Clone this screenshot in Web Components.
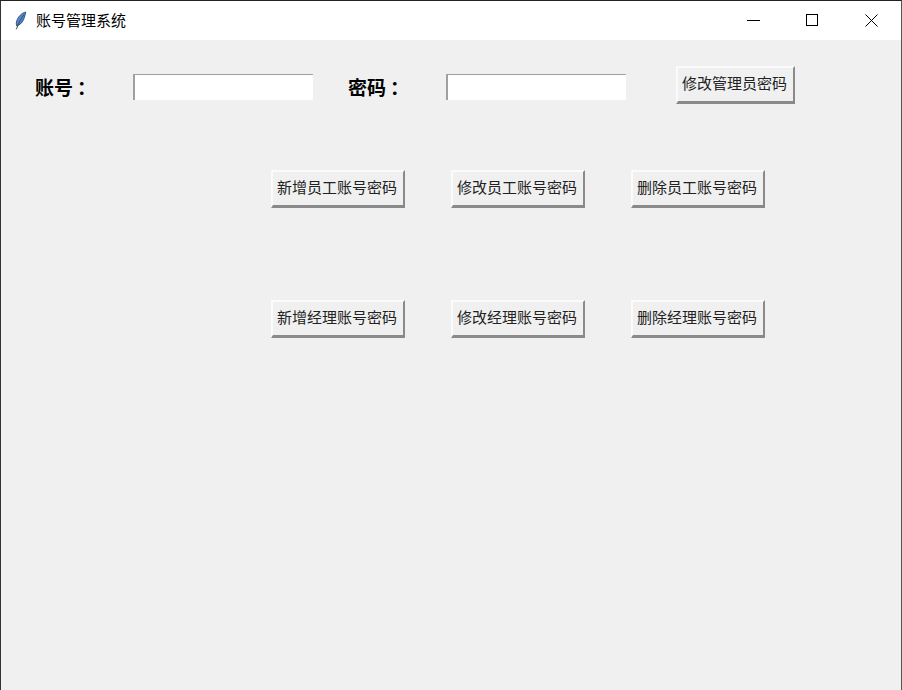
<!DOCTYPE html>
<html lang="zh">
<head>
<meta charset="utf-8">
<title>账号管理系统</title>
<style>
  html, body { margin: 0; height: 100%; background: #f0f0f0; }
  body { font-family: "Noto Sans CJK SC", "Liberation Sans", sans-serif; overflow: hidden; }
  .colon { margin-left: 4px; }
</style>
</head>
<body>
<app-window>
  <title-bar>账号管理系统</title-bar>
  <form-row class="login">
    <field-label style="width:99px">账号<span class="colon">：</span></field-label>
    <text-input style="margin-right:34px"></text-input>
    <field-label style="width:99px">密码<span class="colon">：</span></field-label>
    <text-input style="margin-right:50px"></text-input>
    <tk-button style="width:119px;height:38px">修改管理员密码</tk-button>
  </form-row>
  <button-row style="margin-top:66px">
    <tk-button>新增员工账号密码</tk-button>
    <tk-button>修改员工账号密码</tk-button>
    <tk-button>删除员工账号密码</tk-button>
  </button-row>
  <button-row style="margin-top:92px">
    <tk-button>新增经理账号密码</tk-button>
    <tk-button>修改经理账号密码</tk-button>
    <tk-button>删除经理账号密码</tk-button>
  </button-row>
</app-window>

<script>
class AppWindow extends HTMLElement {
    constructor() {
        super();
        const root = this.attachShadow({ mode: 'open' });
        root.innerHTML = `
      <style>
        :host{
          display:block;
          box-sizing:border-box;
          width:902px;height:690px;
          background:#f0f0f0;
          border-top:1px solid #222;
          border-left:1px solid #333;
          border-right:1px solid #555;
        }
      </style>
      <slot></slot>
    `;
    }
}

class TitleBar extends HTMLElement {
    constructor() {
        super();
        const root = this.attachShadow({ mode: 'open' });
        root.innerHTML = `
      <style>
        :host{
          display:flex;
          align-items:center;
          height:39px;
          background:#fff;
          color:#000;
          font-size:15px;
        }
        .icon{width:12px;height:22px;margin-left:14px;margin-right:9px;flex:none}
        .name{flex:1;white-space:nowrap;position:relative;top:-1px}
        .ctl{width:59px;height:39px;display:flex;align-items:center;justify-content:center;flex:none}
        svg{display:block}
      </style>
      <svg class="icon" viewBox="0 0 14 22">
        <path d="M12.5 0.5C8 1.5 3.5 6 2 11c-.6 2-.7 4-.2 5.6 3.4-.6 6.6-3.4 8.2-7.2 1.2-3 2.2-6.200 2.500-8.900z" fill="#4f8ad8" stroke="#24374f" stroke-width=".9"/>
        <path d="M10.500 3.500C7.500 7.500 4 13.500 1.500 20.800" fill="none" stroke="#3a4654" stroke-width="1.100"/>
      </svg>
      <span class="name"><slot></slot></span>
      <div class="ctl">
        <svg width="13" height="13"><path d="M0 6.500H13" stroke="#000" stroke-width="1"/></svg>
      </div>
      <div class="ctl">
        <svg width="13" height="13"><rect x=".5" y=".5" width="11" height="11" fill="none" stroke="#000"/></svg>
      </div>
      <div class="ctl">
        <svg width="13" height="13"><path d="M.5.500 12.500 12.500M12.500.500.500 12.500" stroke="#000" stroke-width="1" fill="none"/></svg>
      </div>
    `;
    }
}

class FormRow extends HTMLElement {
    constructor() {
        super();
        const root = this.attachShadow({ mode: 'open' });
        root.innerHTML = `
      <style>
        :host{
          display:flex;
          align-items:center;
          height:38px;
          margin-top:26px;
          padding-left:33px;
        }
      </style>
      <slot></slot>
    `;
    }
}

class ButtonRow extends HTMLElement {
    constructor() {
        super();
        const root = this.attachShadow({ mode: 'open' });
        root.innerHTML = `
      <style>
        :host{
          display:flex;
          gap:46px;
          padding-left:270px;
        }
      </style>
      <slot></slot>
    `;
    }
}

class FieldLabel extends HTMLElement {
    constructor() {
        super();
        const root = this.attachShadow({ mode: 'open' });
        root.innerHTML = `
      <style>
        :host{
          display:block;
          flex:none;
          box-sizing:border-box;
          height:38px;
          padding:4px 0 0 1px;
          font-size:19px;
          font-weight:700;
          line-height:34px;
          color:#000;
          white-space:nowrap;
        }
      </style>
      <slot></slot>
    `;
    }
}

class TextInput extends HTMLElement {
    constructor() {
        super();
        const root = this.attachShadow({ mode: 'open' });
        root.innerHTML = `
      <style>
        :host{display:block;flex:none;width:180px;height:26px;margin-top:4px}
        input{
          display:block;
          box-sizing:border-box;
          width:100%;height:100%;
          margin:0;padding:0 2px;
          background:#fff;
          border:0;
          border-top:1px solid #a0a0a0;
          border-left:2px solid #a0a0a0;
          outline:none;
        }
      </style>
      <input type="text">
    `;
    }
}

class TkButton extends HTMLElement {
    constructor() {
        super();
        const root = this.attachShadow({ mode: 'open' });
        root.innerHTML = `
      <style>
        :host{
          display:block;
          flex:none;
          box-sizing:border-box;
          width:134px;height:38px;
        }
        button{
          display:block;
          box-sizing:border-box;
          width:100%;height:100%;
          margin:0;padding:0 2px 4px 0;
          background:#f0f0f0;
          color:#222;
          font:inherit;
          font-size:15px;
          white-space:nowrap;
          border:0;
          border-top:2px solid #fbfbfb;
          border-left:2px solid #fbfbfb;
          border-right:2px solid #8a8a8a;
          border-bottom:3px solid #8a8a8a;
        }
      </style>
      <button type="button"><slot></slot></button>
    `;
    }
}

customElements.define('app-window', AppWindow);
customElements.define('title-bar', TitleBar);
customElements.define('form-row', FormRow);
customElements.define('button-row', ButtonRow);
customElements.define('field-label', FieldLabel);
customElements.define('text-input', TextInput);
customElements.define('tk-button', TkButton);
</script>
</body>
</html>
